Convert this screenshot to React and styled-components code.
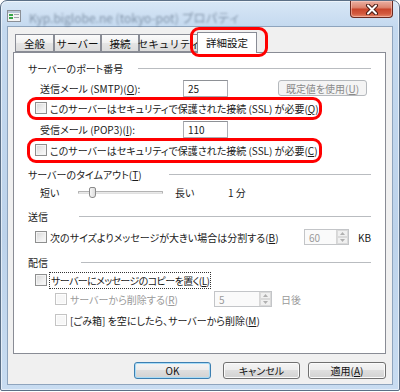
import React from 'react';
import styled, { createGlobalStyle } from 'styled-components';

const GlobalStyle = createGlobalStyle`
  html, body {
    margin: 0;
    padding: 0;
    background: #ffffff;
  }
  body {
    font-family: "Noto Sans CJK JP", "Noto Sans", sans-serif;
    font-size: 10px;
    color: #1a1a1a;
  }
`;

const Window = styled.div`
  box-sizing: border-box;
  width: 400px;
  height: 391px;
  border: 1px solid #5b6f86;
  border-radius: 7px 7px 2px 2px;
  padding: 0 6px 7px;
  display: flex;
  flex-direction: column;
  background: linear-gradient(180deg, #d8e7f6 0%, #c4d9ef 26px, #bdd3eb 60%, #c8dcf1 100%);
  box-shadow: inset 0 0 0 1px rgba(255, 255, 255, 0.55);
`;

const TitleBar = styled.div`
  height: 25px;
  display: flex;
  align-items: flex-start;
`;

const TitleIcon = styled.svg`
  margin-top: 8px;
  flex: none;
`;

const TitleText = styled.div`
  margin: 8px 0 0 8px;
  font-size: 12px;
  color: #26384f;
  opacity: 0.45;
  filter: blur(1.3px);
  white-space: nowrap;
`;

const CloseButton = styled.div`
  margin-left: auto;
  width: 43px;
  height: 17px;
  box-sizing: border-box;
  border: 1px solid #6b2a20;
  border-top: none;
  border-radius: 0 0 4px 4px;
  background: linear-gradient(180deg, #eab0a2 0%, #dd8570 40%, #c9462c 52%, #d35a3e 80%, #e58a6c 100%);
  box-shadow: inset 0 0 0 1px rgba(255, 210, 200, 0.5);
  display: flex;
  align-items: center;
  justify-content: center;
`;

const Client = styled.div`
  flex: 1;
  display: flex;
  flex-direction: column;
  background: #f0f0f0;
  border: 1px solid #8ea4bd;
  padding: 5px 6px 5px 5px;
`;

const TabStrip = styled.div`
  height: 20px;
  display: flex;
  align-items: flex-end;
  padding-left: 2px;
`;

const Tab = styled.div`
  box-sizing: border-box;
  width: ${(p) => p.$w}px;
  height: ${(p) => (p.$active ? 21 : 18)}px;
  margin-bottom: ${(p) => (p.$active ? -1 : 0)}px;
  margin-left: ${(p) => (p.$active ? -2 : 0)}px;
  border: 1px solid #898c95;
  border-bottom: ${(p) => (p.$active ? 'none' : '1px solid #898c95')};
  background: ${(p) =>
    p.$active ? '#ffffff' : 'linear-gradient(180deg, #fbfbfb 0%, #f0f0f0 50%, #e5e5e5 50%, #dcdcdc 100%)'};
  display: flex;
  align-items: center;
  justify-content: center;
  font-size: 10.5px;
  color: #111;
  white-space: nowrap;
  position: relative;
  z-index: ${(p) => (p.$active ? 2 : 0)};
  padding-bottom: ${(p) => (p.$active ? 1 : 0)}px;

  ${(p) =>
    p.$mark &&
    `
    &::after {
      content: '';
      position: absolute;
      left: -8px;
      top: -6px;
      right: -12px;
      bottom: -4px;
      border: 3px solid #f00;
      border-radius: 9px;
    }
  `}
`;

const Panel = styled.div`
  box-sizing: border-box;
  height: 302px;
  border: 1px solid #898c95;
  background: #ffffff;
  padding: 6px 14px 0 14px;
  display: flex;
  flex-direction: column;
`;

const Row = styled.div`
  height: 18px;
  display: flex;
  align-items: center;
  margin-top: ${(p) => p.$mt || 0}px;
  padding-left: ${(p) => p.$indent || 0}px;
  white-space: nowrap;
  position: relative;

  ${(p) =>
    p.$mark &&
    `
    &::after {
      content: '';
      position: absolute;
      left: -1px;
      top: ${p.$markTop}px;
      width: 295px;
      bottom: ${p.$markBottom}px;
      box-sizing: border-box;
      border: 3px solid #f00;
      border-radius: 9px;
    }
  `}
`;

const Text = styled.span`
  font-feature-settings: "palt" 1;
  color: ${(p) => (p.$disabled ? '#9a9a9a' : '#1a1a1a')};
  width: ${(p) => (p.$w ? `${p.$w}px` : 'auto')};
  flex: none;
`;

const Key = styled.span`
  text-decoration: underline;
  text-underline-offset: 1px;
`;

const HeaderLine = styled.div`
  margin-left: auto;
  width: ${(p) => p.$w}px;
  height: 1px;
  background: #b9bcc0;
`;

const Field = styled.div`
  box-sizing: border-box;
  width: 45px;
  height: 17px;
  border: 1px solid #abadb3;
  border-top-color: #8e9196;
  background: #fff;
  padding-left: 4px;
  display: flex;
  align-items: center;
`;

const FlatButton = styled.div`
  box-sizing: border-box;
  margin-left: 50px;
  width: 89px;
  height: 16px;
  border: 1px solid #b5b9bd;
  border-radius: 3px;
  background: #f4f4f4;
  color: #8a8a8a;
  display: flex;
  align-items: center;
  justify-content: center;
  font-feature-settings: "palt" 1;
`;

const Check = styled.span`
  box-sizing: border-box;
  flex: none;
  width: 12px;
  height: 12px;
  margin-right: 3px;
  border: 1px solid ${(p) => (p.$disabled ? '#c4c4c4' : '#8e8f8f')};
  background: ${(p) =>
    p.$disabled ? '#f7f7f7' : 'linear-gradient(135deg, #d6d6d6 0%, #efefef 60%, #fbfbfb 100%)'};
  box-shadow: inset 0 0 0 1px ${(p) => (p.$disabled ? '#fdfdfd' : '#f4f4f4')};
`;

const Focus = styled.span`
  outline: 1px dotted #333;
  outline-offset: 0;
  padding: 0 1px;
  letter-spacing: -0.6px;
  font-feature-settings: "palt" 1;
`;

const Track = styled.div`
  position: relative;
  box-sizing: border-box;
  width: 85px;
  height: 3px;
  margin-right: 12px;
  border: 1px solid #b3b3b3;
  border-bottom-color: #e0e0e0;
  background: #e9e9e9;
  border-radius: 1px;
`;

const Thumb = styled.div`
  position: absolute;
  left: 10px;
  top: -5px;
  box-sizing: border-box;
  width: 7px;
  height: 11px;
  border: 1px solid #8a8a8a;
  border-radius: 2px 2px 3px 3px;
  background: linear-gradient(90deg, #f6f6f6, #dcdcdc);
`;

const Spin = styled.div`
  box-sizing: border-box;
  display: flex;
  width: ${(p) => p.$w}px;
  height: 16px;
  margin-left: ${(p) => (p.$auto ? 'auto' : '0')};
  border: 1px solid #c3c5c8;
  background: #fafafa;
  color: #9a9a9a;
`;

const SpinValue = styled.div`
  flex: 1;
  display: flex;
  align-items: center;
  padding-left: 4px;
`;

const SpinButtons = styled.div`
  width: 11px;
  display: flex;
  flex-direction: column;
  border-left: 1px solid #d6d6d6;
`;

const SpinArrow = styled.div`
  flex: 1;
  display: flex;
  align-items: center;
  justify-content: center;
  background: #f0f0f0;
  border: 1px solid #dadada;
`;

const Unit = styled.span`
  margin-left: 9px;
  color: ${(p) => (p.$disabled ? '#9a9a9a' : '#1a1a1a')};
  font-feature-settings: "palt" 1;
`;

const ButtonBar = styled.div`
  margin-top: 8px;
  display: flex;
  justify-content: flex-end;
`;

const Button = styled.div`
  box-sizing: border-box;
  width: ${(p) => p.$w}px;
  height: 17px;
  margin-left: ${(p) => p.$ml}px;
  border: 1px solid ${(p) => (p.$default ? '#3c7fb1' : '#707070')};
  border-radius: 3px;
  background: linear-gradient(180deg, #f4f4f4 0%, #ececec 50%, #dedede 50%, #d2d2d2 100%);
  box-shadow: inset 0 0 0 1px ${(p) => (p.$default ? '#a8dcf7' : '#fbfbfb')};
  display: flex;
  align-items: center;
  justify-content: center;
  color: #111;
  font-feature-settings: "palt" 1;
`;

function Checkbox({ disabled }) {
  return <Check $disabled={disabled} />;
}

function SpinBox({ value, width, auto }) {
  return (
    <Spin $w={width} $auto={auto}>
      <SpinValue>{value}</SpinValue>
      <SpinButtons>
        <SpinArrow>
          <svg width="5" height="3" viewBox="0 0 5 3">
            <path d="M0 3 L2.5 0 L5 3 Z" fill="#b0b0b0" />
          </svg>
        </SpinArrow>
        <SpinArrow>
          <svg width="5" height="3" viewBox="0 0 5 3">
            <path d="M0 0 L2.5 3 L5 0 Z" fill="#b0b0b0" />
          </svg>
        </SpinArrow>
      </SpinButtons>
    </Spin>
  );
}

export default function App() {
  return (
    <>
      <GlobalStyle />
      <Window>
        <TitleBar>
          <TitleIcon width="14" height="14" viewBox="0 0 14 14">
            <rect x="0.5" y="1.5" width="13" height="11" fill="#f4f4f4" stroke="#8a8f96" />
            <rect x="1" y="2" width="12" height="2" fill="#b8c6d6" />
            <rect x="2" y="5" width="4" height="2" fill="#3aa64a" />
            <rect x="2" y="8" width="4" height="2" fill="#3aa64a" />
            <rect x="7" y="5" width="5" height="1" fill="#a0a6ad" />
            <rect x="7" y="8" width="5" height="1" fill="#a0a6ad" />
          </TitleIcon>
          <TitleText>Kyp.biglobe.ne (tokyo-pot) プロパティ</TitleText>
          <CloseButton>
            <svg width="14" height="11" viewBox="0 0 14 11">
              <path d="M3 1.5 L11 9.5 M11 1.5 L3 9.5" stroke="#4a1c15" strokeWidth="4" strokeLinecap="round" />
              <path d="M3 1.5 L11 9.5 M11 1.5 L3 9.5" stroke="#ffffff" strokeWidth="2" strokeLinecap="round" />
            </svg>
          </CloseButton>
        </TitleBar>

        <Client>
          <TabStrip>
            <Tab $w={39}>全般</Tab>
            <Tab $w={47}>サーバー</Tab>
            <Tab $w={38}>接続</Tab>
            <Tab $w={60}>セキュリティ</Tab>
            <Tab $w={60} $active $mark>詳細設定</Tab>
          </TabStrip>

          <Panel>
            <Row>
              <Text>サーバーのポート番号</Text>
              <HeaderLine $w={233} />
            </Row>
            <Row $mt={2} $indent={12}>
              <Text $w={143}>送信メール (SMTP)(<Key>O</Key>):</Text>
              <Field>25</Field>
              <FlatButton>既定値を使用(<Key>U</Key>)</FlatButton>
            </Row>
            <Row $mt={2} $indent={7} $mark $markTop={-2} $markBottom={-3}>
              <Checkbox />
              <Text>このサーバーはセキュリティで保護された接続 (SSL) が必要(<Key>Q</Key>)</Text>
            </Row>
            <Row $mt={3} $indent={12}>
              <Text $w={143}>受信メール (POP3)(<Key>I</Key>):</Text>
              <Field>110</Field>
            </Row>
            <Row $mt={3} $indent={7} $mark $markTop={-3} $markBottom={-4}>
              <Checkbox />
              <Text>このサーバーはセキュリティで保護された接続 (SSL) が必要(<Key>C</Key>)</Text>
            </Row>

            <Row $mt={6}>
              <Text>サーバーのタイムアウト(<Key>T</Key>)</Text>
              <HeaderLine $w={202} />
            </Row>
            <Row $indent={12}>
              <Text $w={38}>短い</Text>
              <Track>
                <Thumb />
              </Track>
              <Text $w={53}>長い</Text>
              <Text>1 分</Text>
            </Row>

            <Row $mt={6}>
              <Text>送信</Text>
              <HeaderLine $w={292} />
            </Row>
            <Row $mt={3} $indent={7}>
              <Checkbox />
              <Text>次のサイズよりメッセージが大きい場合は分割する(<Key>B</Key>)</Text>
              <SpinBox value="60" width={45} auto />
              <Unit>KB</Unit>
            </Row>

            <Row $mt={7}>
              <Text>配信</Text>
              <HeaderLine $w={290} />
            </Row>
            <Row $indent={7}>
              <Checkbox />
              <Focus>サーバーにメッセージのコピーを置く(<Key>L</Key>)</Focus>
            </Row>
            <Row $mt={1} $indent={27}>
              <Checkbox disabled />
              <Text $w={144} $disabled>サーバーから削除する(<Key>R</Key>)</Text>
              <SpinBox value="5" width={58} />
              <Unit $disabled>日後</Unit>
            </Row>
            <Row $mt={3} $indent={27}>
              <Checkbox disabled />
              <Text>[ごみ箱] を空にしたら、サーバーから削除(<Key>M</Key>)</Text>
            </Row>
          </Panel>

          <ButtonBar>
            <Button $w={77} $ml={0} $default>OK</Button>
            <Button $w={77} $ml={12}>キャンセル</Button>
            <Button $w={78} $ml={8}>適用(<Key>A</Key>)</Button>
          </ButtonBar>
        </Client>
      </Window>
    </>
  );
}
